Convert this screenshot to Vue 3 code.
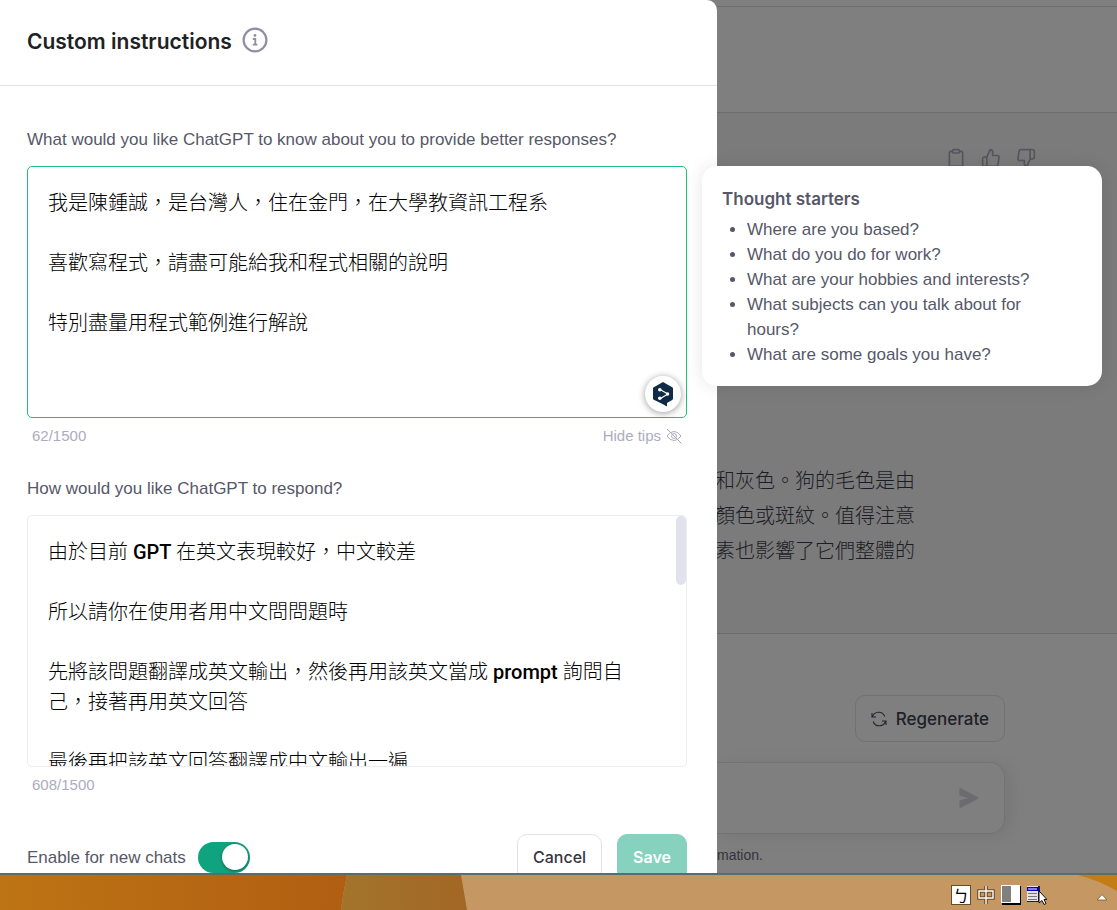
<script setup>
import { ref } from 'vue'

const about = ref('我是陳鍾誠，是台灣人，住在金門，在大學教資訊工程系\n\n喜歡寫程式，請盡可能給我和程式相關的說明\n\n特別盡量用程式範例進行解說')
const respond = ref('由於目前 GPT 在英文表現較好，中文較差\n\n所以請你在使用者用中文問問題時\n\n先將該問題翻譯成英文輸出，然後再用該英文當成 prompt 詢問自己，接著再用英文回答\n\n最後再把該英文回答翻譯成中文輸出一遍')
const enabled = ref(true)
const starters = [
  'Where are you based?',
  'What do you do for work?',
  'What are your hobbies and interests?',
  'What subjects can you talk about for hours?',
  'What are some goals you have?',
]
const answer = ['和灰色。狗的毛色是由', '顏色或斑紋。值得注意', '素也影響了它們整體的']
</script>

<template>
  <div class="desktop">
    <div class="browser">
      <form class="dialog" @submit.prevent>
        <header class="head">
          <h1>Custom instructions</h1>
          <button type="button" class="icon-btn" aria-label="About custom instructions">
            <svg width="26" height="26" viewBox="0 0 26 26" fill="none" stroke="#8e8ea0" stroke-width="2.2">
              <circle cx="13" cy="13" r="11.4" />
              <path d="M10.8 12h2.5v5.600M10.800 17.600h4.600" stroke-width="1.800" />
              <circle cx="13" cy="8.400" r="1.400" fill="#8e8ea0" stroke="none" />
            </svg>
          </button>
        </header>

        <div class="body">
          <label class="question" for="about">What would you like ChatGPT to know about you to provide better responses?</label>
          <div class="field">
            <textarea id="about" v-model="about" class="active" spellcheck="false"></textarea>
            <button type="button" class="translate" aria-label="Translate">
              <svg width="22" height="26" viewBox="0 0 22 26">
                <path d="M11 1l9.2 5.2q.8.5.8 1.4v10q0 .9-.8 1.4L15 22v3.6L10 22.800 1.800 18.800Q1 18.400 1 17.500V7.600Q1 6.700 1.800 6.200z" fill="#0f2b46" />
                <path d="M8 8.500l8 4.600-8 4.600" fill="none" stroke="#fff" stroke-width="1.100" />
                <circle cx="7.800" cy="8.700" r="1.800" fill="#fff" />
                <circle cx="15.500" cy="13" r="1.800" fill="#fff" />
                <circle cx="7.800" cy="17.300" r="1.800" fill="#fff" />
              </svg>
            </button>
            <aside class="tips">
              <h2>Thought starters</h2>
              <ul>
                <li v-for="s in starters" :key="s">{{ s }}</li>
              </ul>
            </aside>
          </div>
          <div class="meta">
            <span>62/1500</span>
            <button type="button" class="hide">
              Hide tips
              <svg width="16" height="16" viewBox="0 0 16 16" fill="none" stroke="#acacbe" stroke-width="1">
                <path d="M1 8q2.800-4.500 7-4.500T15 8q-2.800 4.500-7 4.500T1 8z" />
                <circle cx="8" cy="8" r="2.400" />
                <path d="M1 1l14.500 14.500" />
              </svg>
            </button>
          </div>

          <label class="question" for="respond">How would you like ChatGPT to respond?</label>
          <div class="field">
            <textarea id="respond" v-model="respond" spellcheck="false"></textarea>
            <span class="thumb"></span>
          </div>
          <div class="meta"><span>608/1500</span></div>
        </div>

        <footer class="actions">
          <label class="enable">
            Enable for new chats
            <input v-model="enabled" type="checkbox" role="switch" />
          </label>
          <div class="buttons">
            <button type="button" class="cancel">Cancel</button>
            <button type="submit" class="save">Save</button>
          </div>
        </footer>
      </form>

      <main class="chat">
        <div class="bar"></div>
        <section class="prompt"></section>
        <section class="reply">
          <div class="votes">
            <button type="button" class="icon-btn" aria-label="Copy">
              <svg width="20" height="20" viewBox="0 0 24 24" class="line">
                <path d="M16 4h2a2 2 0 0 1 2 2v14a2 2 0 0 1-2 2H6a2 2 0 0 1-2-2V6a2 2 0 0 1 2-2h2" />
                <rect x="8" y="2" width="8" height="4" rx="1" />
              </svg>
            </button>
            <button type="button" class="icon-btn" aria-label="Good response">
              <svg width="20" height="20" viewBox="0 0 24 24" class="line">
                <path d="M14 9V5a3 3 0 0 0-3-3l-4 9v11h11.280a2 2 0 0 0 2-1.700l1.380-9a2 2 0 0 0-2-2.300zM7 22H4a2 2 0 0 1-2-2v-7a2 2 0 0 1 2-2h3" />
              </svg>
            </button>
            <button type="button" class="icon-btn" aria-label="Bad response">
              <svg width="20" height="20" viewBox="0 0 24 24" class="line">
                <path d="M10 15v4a3 3 0 0 0 3 3l4-9V2H5.720a2 2 0 0 0-2 1.700l-1.380 9a2 2 0 0 0 2 2.300zM17 2h2.670A2.310 2.310 0 0 1 22 4v7a2.310 2.310 0 0 1-2.330 2H17" />
              </svg>
            </button>
          </div>
          <div class="answer">
            <p v-for="line in answer" :key="line">{{ line }}</p>
          </div>
        </section>
        <section class="compose">
          <button type="button" class="regen">
            <svg width="16" height="16" viewBox="0 0 16 16" fill="none" stroke="#25252d" stroke-width="1.100">
              <path d="M1 2v4h4M1.400 6A6.500 6.500 0 0 1 13.800 5.500M15 14v-4h-4M14.600 10A6.500 6.500 0 0 1 2.200 10.500" />
            </svg>
            Regenerate
          </button>
          <div class="entry">
            <button type="button" class="icon-btn" aria-label="Send message">
              <svg width="20" height="20" viewBox="0 0 20 20" fill="#6b6b70">
                <path d="M.5 1.200Q.5-.5 2.200.4L18.700 9q1.300 1 0 2L2.200 19.600Q.5 20.400.5 18.800V12.500L9.500 10 .5 7.700z" />
              </svg>
            </button>
          </div>
          <small>mation.</small>
        </section>
      </main>
    </div>

    <nav class="taskbar" aria-label="Taskbar">
      <svg class="wall" viewBox="0 0 1117 35" preserveAspectRatio="none">
        <defs>
          <linearGradient id="left"><stop offset="0" stop-color="#bd7414" /><stop offset="1" stop-color="#b15e12" /></linearGradient>
          <linearGradient id="mid"><stop offset="0" stop-color="#a3742c" /><stop offset="1" stop-color="#a26724" /></linearGradient>
        </defs>
        <rect width="1117" height="35" fill="#c49763" />
        <path d="M0 0H347Q343 18 341 35H0z" fill="url(#left)" />
        <path d="M347 0H461L467 35H341Q343 18 347 0z" fill="url(#mid)" />
        <path d="M1078 0Q1098 5 1117 16V0z" fill="#c47c14" />
      </svg>
      <div class="tray">
        <button type="button" class="key" aria-label="Bopomofo">ㄅ</button>
        <button type="button" class="icon-btn" aria-label="Chinese input">
          <svg width="18" height="20" viewBox="0 0 18 20" fill="none">
            <path d="M2 6h14v7H2zM9 1v18" stroke="#6b4a26" stroke-width="3.600" />
            <path d="M2 6h14v7H2zM9 1v18" stroke="#fff" stroke-width="1.400" />
          </svg>
        </button>
        <button type="button" class="icon-btn" aria-label="Half width">
          <svg width="20" height="20" viewBox="0 0 20 20">
            <path d="M1 1h19v19H1z" fill="#000" /><path d="M0 0h19v18H0z" fill="#fff" /><path d="M1 1h9v16H1z" fill="#808080" />
          </svg>
        </button>
        <button type="button" class="icon-btn" aria-label="Input menu">
          <svg width="20" height="20" viewBox="0 0 20 20">
            <path d="M0 1h13v16H0z" fill="#222" /><path d="M0 1h11v15H0z" fill="#e4e4e4" /><path d="M0 2h12v4H0z" fill="#0000b4" />
            <path d="M1 4h9" stroke="#fff" /><path d="M1 8.500h9M1 11.500h9M1 14.500h9" stroke="#777" />
            <path d="M12 6v12l3-2.500 2 4 2-1-2-4h3z" fill="#fff" stroke="#111" />
          </svg>
        </button>
        <button type="button" class="icon-btn more" aria-label="Show hidden icons">
          <svg width="12" height="8" viewBox="0 0 12 8"><path d="M1 7l5-5.500L11 7z" fill="#fff" stroke="#76552f" stroke-width=".8" /></svg>
        </button>
      </div>
    </nav>
  </div>
</template>

<style>
body { margin: 0; }
</style>

<style scoped>
* { box-sizing: border-box; }
.desktop {
  display: flex; flex-direction: column; height: 100vh; overflow: hidden;
  font-family: "Liberation Sans", "Noto Sans CJK TC", sans-serif; font-size: 17px; line-height: 25px; color: #565869;
}
h1, h2, p, ul { margin: 0; }
button { font: inherit; cursor: pointer; }
.icon-btn { display: flex; padding: 0; border: 0; background: none; }
.browser {
  flex: 1; min-height: 0; overflow: hidden; background: #7f7f7f;
  display: grid; grid-template-columns: minmax(0, 717px) minmax(0, 1fr);
}
.dialog { position: relative; z-index: 1; background: #fff; border-radius: 0 10px 0 0; }
.head { display: flex; align-items: center; gap: 10px; height: 86px; padding: 0 27px 5px; border-bottom: 1px solid #e3e3e5; }
h1 { padding-top: 3px; font: 600 21px/30px Inter, sans-serif; color: #202123; }
.body { padding: 41px 30px 0 27px; }
.question { display: block; margin-bottom: 14px; }
.field { position: relative; }
textarea {
  display: block; width: 100%; height: 252px; padding: 21px 30px 19px 20px; resize: none; outline: 0; overflow: hidden;
  border: 1px solid #ececf1; border-radius: 5px; background: #fff; color: #000;
  font: 500 20px/30px Roboto, "Noto Sans CJK TC Light", "Noto Sans CJK TC", sans-serif;
}
textarea.active { border-color: #19c37d; }
.translate {
  position: absolute; right: 6px; bottom: 6px; width: 36px; height: 36px; padding: 0;
  display: flex; align-items: center; justify-content: center;
  border: 0; border-radius: 50%; background: #fff; box-shadow: 0 1px 7px rgba(0, 0, 0, .4);
}
.tips {
  position: absolute; left: calc(100% + 15px); top: 0; width: 400px; padding: 21px 30px 19px 20px;
  border-radius: 15px; background: #fff; box-shadow: 0 0 18px rgba(0, 0, 0, .1);
}
h2 { font: 600 17px/25px Inter, sans-serif; margin-bottom: 5px; }
ul { padding-left: 25px; }
.thumb { position: absolute; top: 1px; right: 1px; width: 10px; height: 69px; border-radius: 5px; background: #e2e2ec; }
.meta { display: flex; justify-content: space-between; height: 58px; padding: 5px 5px 0; font-size: 15px; color: #acacbe; }
.hide { display: flex; align-items: center; gap: 5px; height: 25px; padding: 0; border: 0; background: none; color: inherit; }
.actions { display: flex; justify-content: space-between; align-items: flex-start; padding: 9px 30px 0 27px; }
.enable { display: flex; align-items: center; gap: 12px; height: 47px; }
.enable input { appearance: none; display: flex; width: 52px; height: 31px; margin: 0; padding: 2px; border-radius: 16px; background: #10a37f; }
.enable input::before { content: ""; width: 26px; height: 26px; margin-left: auto; border-radius: 50%; background: #fff; box-shadow: 0 1px 3px rgba(0, 0, 0, .4); }
.enable input:not(:checked) { background: #c5c5d2; }
.enable input:not(:checked)::before { margin-left: 0; }
.buttons { display: flex; gap: 15px; }
.buttons button { height: 47px; padding: 0 15px; border-radius: 10px; font: 500 16px/25px Inter, sans-serif; }
.buttons .cancel { border: 1px solid #e3e3e5; background: #fff; color: #353740; }
.buttons .save { border: 1px solid #87d2bf; background: #87d2bf; color: #fff; font-weight: 600; }
.chat { display: flex; flex-direction: column; }
.bar { height: 7px; border-bottom: 1px solid #6d6d6d; }
.prompt { height: 106px; border-bottom: 1px solid #6d6d6d; }
.reply { height: 521px; border-bottom: 1px solid #6c6c6c; background: #7b7b7b; padding-top: 35px; }
.votes { display: flex; justify-content: flex-end; gap: 15px; padding-right: 81px; }
.line { fill: none; stroke: #565660; stroke-width: 2; stroke-linejoin: round; }
.answer { padding: 296px 202px 0 0; font: 300 20px/35px Inter, "Noto Sans CJK TC", sans-serif; color: #1b1d26; }
.answer p { display: flex; justify-content: flex-end; white-space: nowrap; }
.compose { flex: 1; display: flex; flex-direction: column; align-items: flex-end; padding: 61px 112px 0 0; }
.regen {
  display: flex; align-items: center; gap: 9px; height: 47px; padding: 1px 15px 0;
  border: 1px solid #717171; border-radius: 10px; background: none; color: #202027; font: 500 17px/25px Inter, sans-serif;
}
.entry {
  display: flex; justify-content: flex-end; align-items: center; width: 100%; height: 72px; margin-top: 20px; padding-right: 25px;
  border: 1px solid #737373; border-left: 0; border-radius: 0 15px 15px 0; box-shadow: 5px 2px 18px rgba(0, 0, 0, .07);
}
small { align-self: flex-start; margin-top: 9px; font-size: 14px; color: #33333b; }
.taskbar { position: relative; height: 37px; border-top: 2px solid #5d6c66; }
.wall { display: block; width: 100%; height: 100%; }
.tray { position: absolute; inset: 0 9px 0 auto; display: flex; align-items: center; gap: 6px; padding-top: 4px; }
.key { width: 20px; height: 20px; padding: 0; border: 1px solid #6b4a26; background: #fff; color: #000; font: 16px/18px "Noto Sans CJK TC", sans-serif; }
.more { margin: 4px 0 0 43px; }
</style>
